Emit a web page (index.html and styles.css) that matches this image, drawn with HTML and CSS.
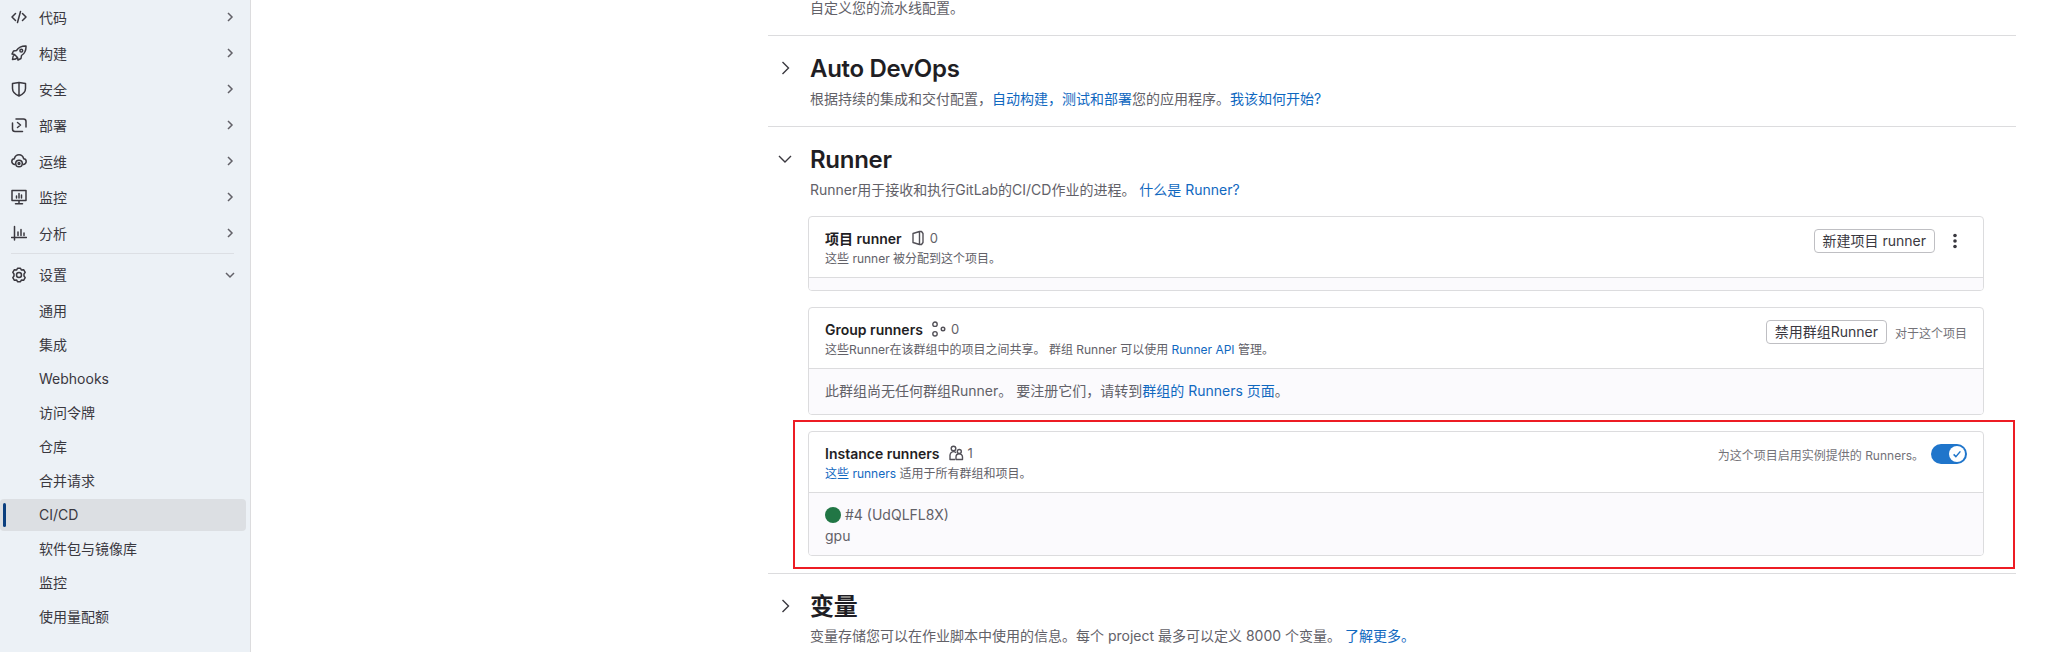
FILE: index.html
```html
<!DOCTYPE html>
<html lang="zh-CN">
<head>
<meta charset="utf-8">
<title>CI/CD 设置</title>
<link rel="stylesheet" href="styles.css">
</head>
<body>
<div class="page">
  <aside class="sidebar">
    <nav class="nav">
      <a class="nav-item"><svg class="ico" viewBox="0 0 16 16"><path d="M4.500 4.500 1 8l3.500 3.500M11.500 4.500 15 8l-3.500 3.500M9.500 2.500l-3 11"/></svg><span class="nav-label">代码</span><svg class="chev" viewBox="0 0 16 16"><path d="m6 4 4 4-4 4"/></svg></a>
      <a class="nav-item"><svg class="ico" viewBox="0 0 16 16"><path d="M15 1c-4.500-.2-7.500 1.500-9.500 4.500L2.500 6 1 9l2.500.5 3 3L7 15l3-1.500.5-3C13.500 8.500 15.200 5.500 15 1ZM3.500 9.500C2 10.500 1.500 12.500 1.500 14.500c2 0 4-.5 5-2"/><circle cx="10.300" cy="5.700" r="1.400"/></svg><span class="nav-label">构建</span><svg class="chev" viewBox="0 0 16 16"><path d="m6 4 4 4-4 4"/></svg></a>
      <a class="nav-item"><svg class="ico" viewBox="0 0 16 16"><path d="M1.500 2.500 8 1.500l6.500 1v5c0 3.500-2.500 5.800-6.500 7.500-4-1.700-6.500-4-6.500-7.500v-5ZM8 1.500V15"/></svg><span class="nav-label">安全</span><svg class="chev" viewBox="0 0 16 16"><path d="m6 4 4 4-4 4"/></svg></a>
      <a class="nav-item"><svg class="ico" viewBox="0 0 16 16"><path d="M1.500 6v6a2.500 2.500 0 0 0 2.500 2.500h7.500M5 2h7.500A2.500 2.500 0 0 1 15 4.500V10M6.500 5.500 9.500 8l-3 2.500"/></svg><span class="nav-label">部署</span><svg class="chev" viewBox="0 0 16 16"><path d="m6 4 4 4-4 4"/></svg></a>
      <a class="nav-item"><svg class="ico" viewBox="0 0 16 16"><path d="M3.500 11.500C1.500 10.800.800 9.500.800 8.400c0-1.400 1-2.400 2.500-2.600C4 3.200 6 1.800 8 1.800s4 1.400 4.700 4c1.500.2 2.500 1.200 2.500 2.600 0 1.100-.7 2.400-2.700 3.100"/><circle cx="8" cy="10.500" r="3.300"/><circle cx="8" cy="10.500" r=".9"/></svg><span class="nav-label">运维</span><svg class="chev" viewBox="0 0 16 16"><path d="m6 4 4 4-4 4"/></svg></a>
      <a class="nav-item"><svg class="ico" viewBox="0 0 16 16"><path d="M1 1.500h14v10H1zM4.500 14.800h7M8 11.500v3.300M5.500 9V7M8 9V4.500M10.500 9V6"/></svg><span class="nav-label">监控</span><svg class="chev" viewBox="0 0 16 16"><path d="m6 4 4 4-4 4"/></svg></a>
      <a class="nav-item"><svg class="ico" viewBox="0 0 16 16"><path d="M.5 12.500h15M3.500 1.500v13.500M7 7v3.500M10 4.500v6M13 8v2.500"/></svg><span class="nav-label">分析</span><svg class="chev" viewBox="0 0 16 16"><path d="m6 4 4 4-4 4"/></svg></a>
      <div class="nav-sep"></div>
      <a class="nav-item parent"><svg class="ico" viewBox="0 0 16 16"><path d="M6.500 1.200h3l.8 1.800 2.300-.3 1.600 2.700L13 7v2l1.200 1.600-1.600 2.700-2.300-.3-.8 1.800h-3l-.8-1.800-2.300.3-1.600-2.700L3 9V7L1.800 5.400l1.600-2.700 2.300.3Z"/><circle cx="8" cy="8" r="2.500"/></svg><span class="nav-label">设置</span><svg class="chev" viewBox="0 0 16 16"><path d="m4 6 4 4 4-4"/></svg></a>
      <a class="nav-item sub"><span class="nav-label">通用</span></a>
      <a class="nav-item sub"><span class="nav-label">集成</span></a>
      <a class="nav-item sub"><span class="nav-label">Webhooks</span></a>
      <a class="nav-item sub"><span class="nav-label">访问令牌</span></a>
      <a class="nav-item sub"><span class="nav-label">仓库</span></a>
      <a class="nav-item sub"><span class="nav-label">合并请求</span></a>
      <a class="nav-item sub active"><span class="nav-label">CI/CD</span></a>
      <a class="nav-item sub"><span class="nav-label">软件包与镜像库</span></a>
      <a class="nav-item sub"><span class="nav-label">监控</span></a>
      <a class="nav-item sub"><span class="nav-label">使用量配额</span></a>
    </nav>
  </aside>
  <main class="main">
    <section class="section first">
      <p class="desc">自定义您的流水线配置。</p>
    </section>
    <section class="section">
      <div class="sec-head"><svg class="sec-chev" viewBox="0 0 16 16"><path d="M5.500 2l6 6-6 6"/></svg><h2 class="sec-title">Auto DevOps</h2></div>
      <p class="desc">根据持续的集成和交付配置，<a class="link">自动构建，测试和部署</a>您的应用程序。<a class="link">我该如何开始?</a></p>
    </section>
    <section class="section open">
      <div class="sec-head"><svg class="sec-chev" viewBox="0 0 16 16"><path d="M2 5l6 6 6-6"/></svg><h2 class="sec-title">Runner</h2></div>
      <p class="desc">Runner用于接收和执行GitLab的CI/CD作业的进程。 <a class="link">什么是 Runner?</a></p>
      <div class="cards">
        <div class="card">
          <div class="card-head">
            <div class="card-info">
              <div class="card-title"><strong>项目 runner</strong><svg class="mini" viewBox="0 0 16 16"><path d="M9.500 1.500 3 3.500v9l6.500 2ZM9.500 1.500h2l1.500 2v9l-1.500 2h-2"/></svg><span class="count">0</span></div>
              <div class="card-sub">这些 runner 被分配到这个项目。</div>
            </div>
            <div class="card-actions"><button class="btn">新建项目 runner</button><svg class="kebab" viewBox="0 0 16 16"><circle cx="8" cy="2.500" r="1.800"/><circle cx="8" cy="8" r="1.800"/><circle cx="8" cy="13.500" r="1.800"/></svg></div>
          </div>
          <div class="card-body empty"></div>
        </div>
        <div class="card">
          <div class="card-head">
            <div class="card-info">
              <div class="card-title"><strong>Group runners</strong><svg class="mini" viewBox="0 0 16 16"><circle cx="4" cy="3.200" r="2.200"/><circle cx="4" cy="12.800" r="2.200"/><circle cx="12" cy="8" r="1.800"/></svg><span class="count">0</span></div>
              <div class="card-sub">这些Runner在该群组中的项目之间共享。 群组 Runner 可以使用 <a class="link">Runner API</a> 管理。</div>
            </div>
            <div class="card-actions group"><button class="btn">禁用群组Runner</button><span class="hint">对于这个项目</span></div>
          </div>
          <div class="card-body notice">此群组尚无任何群组Runner。 要注册它们，请转到<a class="link">群组的 Runners 页面</a>。</div>
        </div>
        <div class="card">
          <div class="card-head">
            <div class="card-info">
              <div class="card-title"><strong>Instance runners</strong><svg class="mini" viewBox="0 0 16 16"><circle cx="5.500" cy="3.500" r="2.300"/><path d="M7 14.500H2V10a3.500 3.500 0 0 1 6-2.300M8 14.500V12a3.200 3.200 0 0 1 6.500 0v2.500Z"/><circle cx="11.300" cy="6.500" r="2"/></svg><span class="count">1</span></div>
              <div class="card-sub"><a class="link">这些 runners</a> 适用于所有群组和项目。</div>
            </div>
            <div class="card-actions instance"><span class="hint">为这个项目启用实例提供的 Runners。</span><span class="toggle"><span class="knob"><svg viewBox="0 0 16 16"><path d="m3.500 8.500 3 3 6-7"/></svg></span></span></div>
          </div>
          <div class="card-body runner">
            <div class="runner-name"><span class="dot"></span>#4 (UdQLFL8X)</div>
            <div class="runner-tag">gpu</div>
          </div>
        </div>
      </div>
    </section>
    <section class="section last">
      <div class="sec-head"><svg class="sec-chev" viewBox="0 0 16 16"><path d="M5.500 2l6 6-6 6"/></svg><h2 class="sec-title">变量</h2></div>
      <p class="desc">变量存储您可以在作业脚本中使用的信息。每个 project 最多可以定义 8000 个变量。 <a class="link">了解更多。</a></p>
    </section>
    <div class="annotation"></div>
  </main>
</div>
</body>
</html>
```
FILE: styles.css
```css
* { box-sizing: border-box; }
html, body { margin: 0; height: 652px; overflow: hidden; background: #fff; }
body { font-family: Inter, "Noto Sans CJK SC", sans-serif; font-size: 14px; color: #3a383f; }
.page { display: flex; height: 652px; }

.sidebar { width: 251px; flex: none; background: #ecf1f6; border-right: 1px solid #dcdcde; padding: 0 4px 0 0; }
.nav { display: flex; flex-direction: column; gap: 2px; }
.nav-item { display: flex; align-items: center; height: 34px; padding-left: 11px; padding-right: 8px; border-radius: 4px; color: #3a383f; position: relative; }
.nav-item.parent { margin-bottom: 1px; }
.nav-item:not(.sub):not(.parent) .nav-label { margin-top: 2px; }
.ico { width: 16px; height: 16px; flex: none; fill: none; stroke: #3a383f; stroke-width: 1.500; stroke-linejoin: round; stroke-linecap: round; margin-right: 12px; }
.nav-label { flex: 1; line-height: 20px; }
.chev { width: 16px; height: 16px; flex: none; fill: none; stroke: #626168; stroke-width: 1.500; }
.nav-sep { height: 1px; margin: 1px 12px 2px 11px; background: #dcdfe4; }
.nav-item.sub { height: 32px; padding-left: 39px; }
.nav-item.active { background: #dcdfe3; }
.nav-item.active::before { content: ""; position: absolute; left: 3px; top: 4px; bottom: 4px; width: 3px; border-radius: 2px; background: #0b3f7f; }

.main { flex: 1; padding-left: 517px; padding-right: 42px; position: relative; min-width: 0; }
.section { border-bottom: 1px solid #dcdcde; padding: 17px 0 17px; }
.section.first { padding: 0 0 19px; }
.section.first .desc { padding-left: 42px; margin: 0; line-height: 16px; }
.section.last { border-bottom: 0; }
.sec-head { display: flex; align-items: center; height: 32px; position: relative; padding-left: 42px; }
.sec-chev { position: absolute; left: 9px; top: 7px; width: 16px; height: 16px; fill: none; stroke: #3a383f; stroke-width: 1.400; }
.sec-title { margin: 0; font-size: 24px; line-height: 32px; font-weight: 600; color: #1f1e24; letter-spacing: -0.3px; }
.desc { margin: 4px 0 0; padding-left: 42px; line-height: 20px; color: #626168; }
.section.last .desc { margin-top: 3px; }
.link { color: #1068bf; }

.cards { display: flex; flex-direction: column; gap: 16px; margin: 16px 32px 0 40px; }
.card { border: 1px solid #dcdcde; border-radius: 4px; background: #fff; overflow: hidden; }
.card-head { display: flex; justify-content: space-between; align-items: flex-start; padding: 11px 16px; border-bottom: 1px solid #dcdcde; height: 61px; }
.card-title { display: flex; align-items: center; height: 20px; color: #1f1e24; }
.card-title strong { font-weight: 600; }
.mini { width: 16px; height: 16px; fill: none; stroke: #535158; stroke-width: 1.400; stroke-linejoin: round; margin: 0 4px 0 8px; }
.count { color: #626168; font-size: 13px; }
.card-sub { font-size: 12px; line-height: 16px; margin-top: 3px; color: #626168; }
.card-actions { display: flex; align-items: center; margin-top: 1px; }
.btn { height: 24px; padding: 0 8px; border: 1px solid #bfbfc3; border-radius: 4px; background: #fff; font: inherit; color: #3a383f; line-height: 20px; }
.kebab { width: 16px; height: 16px; fill: #3a383f; margin-left: 12px; margin-right: 4px; }
.hint { font-size: 12px; color: #737278; }
.group .hint { margin-left: 8px; }
.instance .hint { margin-right: 7px; }
.toggle { display: flex; justify-content: flex-end; align-items: center; width: 36px; height: 20px; padding-right: 2px; border-radius: 10px; background: #1f75cb; }
.knob { width: 16px; height: 16px; border-radius: 50%; background: #fff; display: flex; align-items: center; justify-content: center; }
.knob svg { width: 12px; height: 12px; fill: none; stroke: #1f75cb; stroke-width: 2; }
.card-body { background: #fbfafd; padding: 12px 16px; }
.card-body.empty { height: 12px; padding: 0; }
.card-body.notice { line-height: 20px; height: 45px; color: #626168; }
.card-body.runner { height: 62px; color: #626168; line-height: 20px; }
.runner-name { display: flex; align-items: center; }
.dot { width: 16px; height: 16px; border-radius: 50%; background: #217645; margin-right: 4px; }
.runner-tag { margin-top: 1px; }

.annotation { position: absolute; left: 542px; top: 420px; width: 1222px; height: 149px; border: 2px solid #ed1c24; pointer-events: none; }
```
